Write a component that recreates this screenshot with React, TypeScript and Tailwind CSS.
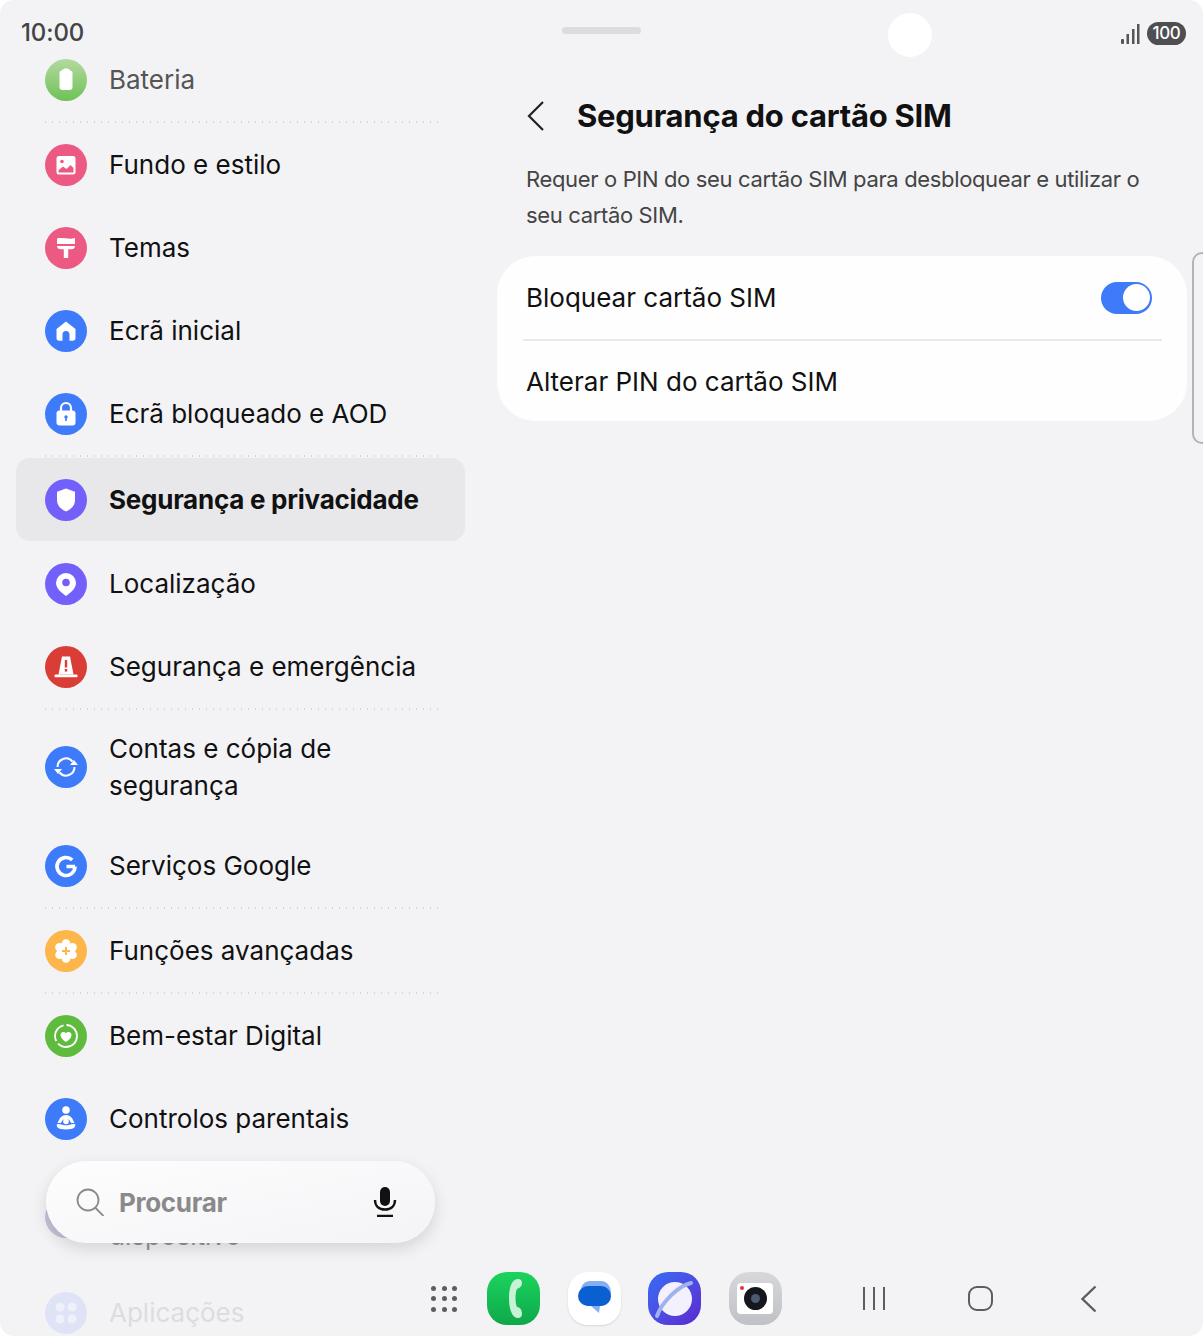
import type { ReactNode } from 'react';

const Divider = () => (
  <div className="ml-[42px] h-[2px] w-[399px] bg-[radial-gradient(circle,#d4d4d8_0.9px,transparent_1.1px)] bg-[length:7px_2px]" />
);

function Row({
  color,
  label,
  icon,
  className = 'h-[83px]',
  textClass = 'font-normal text-[#111]',
}: {
  color: string;
  label: ReactNode;
  icon: ReactNode;
  className?: string;
  textClass?: string;
}) {
  return (
    <div className={`flex items-center pl-[45px] pr-4 ${className}`}>
      <div className={`h-[42px] w-[42px] shrink-0 rounded-full ${color}`}>
        <svg viewBox="0 0 42 42" className="h-[42px] w-[42px]" fill="#fff">
          {icon}
        </svg>
      </div>
      <div className={`ml-[22px] text-[26px] leading-[37px] ${textClass}`}>{label}</div>
    </div>
  );
}

function Sidebar() {
  return (
    <div className="w-[481px] shrink-0 pt-[38px]">
      <Row
        color="bg-gradient-to-b from-[#b3d9a0] to-[#6dc253]"
        label="Bateria"
        textClass="text-[#555]"
        icon={<path d="M17 11.500c0-.8.5-1.300 1.200-1.300h.8V9.500h4v.7h.8c.7 0 1.200.5 1.200 1.300 1.600.2 2.500 1 2.500 2.500v14c0 2-1.200 3-3 3h-7c-1.800 0-3-1-3-3V14c0-1.500.9-2.300 2.500-2.500z" />}
      />
      <Divider />
      <Row
        color="bg-[#ec5a84]"
        label="Fundo e estilo"
        icon={
          <>
            <rect x="11.500" y="12" width="19" height="18.500" rx="2.500" />
            <circle cx="17" cy="17.500" r="1.800" fill="#ec5a84" />
            <path d="M13.500 28.500v-2.300l4.500-3.700 3.500 2.500 4-4 3 3v4.500z" fill="#ec5a84" />
          </>
        }
      />
      <Row
        color="bg-[#ec5a84]"
        label="Temas"
        icon={
          <>
            <path d="M12 11.500c6-1.500 12 1.300 18-.5v6H12z" />
            <path d="M12 19h18c0 2-1.500 3.300-4 3.300h-2.800V31h-4.400v-8.700H16c-2.500 0-4-1.300-4-3.300z" />
          </>
        }
      />
      <Row
        color="bg-[#3e7bfa]"
        label="Ecrã inicial"
        icon={
          <path d="M21 11.500 11.500 19v9c0 1.800 1 2.800 2.800 2.800h3.200v-6.300a3.500 3.500 0 0 1 7 0v6.300h3.200c1.800 0 2.800-1 2.800-2.800v-9z" />
        }
      />
      <Row
        color="bg-[#3e7bfa]"
        label="Ecrã bloqueado e AOD"
        icon={
          <>
            <path d="M16 18v-3a5 5 0 0 1 10 0v3" fill="none" stroke="#fff" strokeWidth="2.200" />
            <rect x="11.500" y="17.500" width="19" height="15" rx="3" />
            <circle cx="21" cy="24" r="1.700" fill="#3e7bfa" />
            <rect x="20.200" y="24" width="1.600" height="4" fill="#3e7bfa" />
          </>
        }
      />
      <Divider />
      <div className="mx-4 mt-px h-[83px] rounded-[14px] bg-[#e8e8eb]">
        <Row
          color="bg-[#7360fa]"
          label="Segurança e privacidade"
          className="h-[83px] !pl-[29px]"
          textClass="font-bold tracking-[-0.25px] text-[#111]"
          icon={<path d="M21 9.500 12 12.800v8.200c0 5.500 3.500 9 9 11.500 5.500-2.500 9-6 9-11.500v-8.200z" />}
        />
      </div>
      <Row
        color="bg-[#7360fa]"
        label="Localização"
        className="mt-px h-[83px]"
        icon={
          <>
            <path d="M21 10a10 10 0 0 0-10 10c0 5 4.500 9 10 13 5.500-4 10-8 10-13a10 10 0 0 0-10-10z" />
            <circle cx="21" cy="19.500" r="3.800" fill="#7360fa" />
          </>
        }
      />
      <Row
        color="bg-[#d93d36]"
        label="Segurança e emergência"
        icon={
          <>
            <path d="M17 10.500h8l3.500 18H13.500z" />
            <rect x="9.500" y="28.500" width="23" height="2.800" rx="1" />
            <rect x="19.800" y="14" width="2.400" height="7.500" fill="#d93d36" />
            <rect x="19.800" y="23" width="2.400" height="2.600" fill="#d93d36" />
          </>
        }
      />
      <Divider />
      <Row
        color="bg-[#3e7bfa]"
        label={
          <>
            Contas e cópia de
            <br />
            segurança
          </>
        }
        className="h-[114px]"
        icon={
          <>
            <path d="M12.500 21a8.500 8.500 0 0 1 15-5.500M29.500 21a8.500 8.500 0 0 1-15 5.500" fill="none" stroke="#fff" strokeWidth="2" />
            <path d="M25 19h8l-4-5zM9 23h8l-4 5z" />
          </>
        }
      />
      <Row
        color="bg-[#3e7bfa]"
        label="Serviços Google"
        icon={
          <path d="M30 21.500a9 9 0 1 1-2.800-6.500M21.500 21.500H30" fill="none" stroke="#fff" strokeWidth="3.600" />
        }
      />
      <Divider />
      <Row
        color="bg-[#fdb64a]"
        label="Funções avançadas"
        icon={
          <>
            <circle cx="21" cy="13.500" r="4.300" />
            <circle cx="27.500" cy="17.300" r="4.300" />
            <circle cx="27.500" cy="24.700" r="4.300" />
            <circle cx="21" cy="28.500" r="4.300" />
            <circle cx="14.500" cy="24.700" r="4.300" />
            <circle cx="14.500" cy="17.300" r="4.300" />
            <circle cx="21" cy="21" r="6" />
            <path d="M21 17v8M17 21h8" stroke="#fdb64a" strokeWidth="2" />
          </>
        }
      />
      <Divider />
      <Row
        color="bg-[#5fbb3e]"
        label="Bem-estar Digital"
        icon={
          <>
            <circle cx="21" cy="21" r="11" fill="none" stroke="#fff" strokeWidth="1.800" strokeDasharray="26 3 20 3 17" />
            <path d="M21 27c-3-2.200-5.500-4.200-5.500-6.800 0-3.500 4-4.200 5.500-1.700 1.500-2.500 5.500-1.800 5.500 1.700 0 2.600-2.500 4.600-5.500 6.800z" />
          </>
        }
      />
      <Row
        color="bg-[#3e7bfa]"
        label="Controlos parentais"
        icon={
          <>
            <circle cx="21" cy="12" r="3.800" />
            <path d="M15 20c3.500-4 8.500-4 12 0l2.500 5h-3.300l-2-3c-2-1.500-4.400-1.500-6.400 0l-2 3h-3.300z" />
            <path d="M12 26c2.800-.5 4 1 9 1.200 5-.2 6.200-1.700 9-1.200 1 2.500-.5 5.500-9 5.500s-10-3-9-5.500z" />
            <circle cx="21" cy="23.500" r="2.800" />
          </>
        }
      />
      <Row
        color="bg-[#a8a4c8]"
        label={
          <>
            Manutenção do
            <br />
            dispositivo
          </>
        }
        className="h-[114px] opacity-60"
        textClass="text-[#555]"
        icon={<circle cx="21" cy="21" r="9" />}
      />
      <Row
        color="bg-[#dfe3f6]"
        label="Aplicações"
        className="-mt-[3px] h-[83px]"
        textClass="text-[#dcdce2]"
        icon={
          <>
            <circle cx="15" cy="15" r="4.500" fill="#eef0fa" />
            <circle cx="27" cy="15" r="4.500" fill="#eef0fa" />
            <circle cx="15" cy="27" r="4.500" fill="#eef0fa" />
            <circle cx="27" cy="27" r="4.500" fill="#eef0fa" />
          </>
        }
      />
    </div>
  );
}

function Main() {
  return (
    <div className="min-w-0 flex-1 pl-4 pr-4 pt-[93px]">
      <div className="flex h-[46px] items-center pl-[29px]">
        <svg viewBox="0 0 20 32" className="h-[32px] w-[20px]" fill="none" stroke="#222" strokeWidth="2.200">
          <path d="M17 2 3 16l14 14" />
        </svg>
        <h1 className="ml-[31px] text-[31px] font-bold leading-[46px] tracking-[-0.25px] text-[#111]">
          Segurança do cartão SIM
        </h1>
      </div>
      <p className="mt-[22px] pl-[29px] pr-[30px] text-[22px] leading-[36px] tracking-[-0.35px] text-[#444]">
        Requer o PIN do seu cartão SIM para desbloquear e utilizar o seu cartão SIM.
      </p>
      <div className="mt-[23px] h-[165px] rounded-[38px] bg-white/90">
        <div className="flex h-[83px] items-center justify-between pl-[29px] pr-[35px] text-[26px] text-[#111]">
          <span>Bloquear cartão SIM</span>
          <div className="flex h-[32px] w-[51px] items-center justify-end rounded-full bg-[#3e7bfa] pr-[2px]">
            <div className="h-[27px] w-[27px] rounded-full bg-white" />
          </div>
        </div>
        <div className="ml-[26px] mr-[25px] h-[2px] bg-[#e9e9ec]" />
        <div className="flex h-[80px] items-center pl-[29px] text-[26px] text-[#111]">Alterar PIN do cartão SIM</div>
      </div>
    </div>
  );
}

function SearchPill() {
  return (
    <div className="absolute left-[46px] top-[1161px] flex h-[82px] w-[389px] items-center rounded-full bg-gradient-to-br from-[#fdfdfe] to-[#f4f4f6] pl-[30px] pr-[38px] shadow-[0_6px_16px_rgba(0,0,0,0.13)]">
      <svg viewBox="0 0 28 28" className="h-[28px] w-[28px]" fill="none" stroke="#8a8a8c" strokeWidth="1.800">
        <circle cx="12" cy="12" r="10.500" />
        <path d="m19.500 20 8 8" />
      </svg>
      <span className="ml-[15px] flex-1 text-[26px] font-bold tracking-[-0.3px] text-[#8a8a8c]">Procurar</span>
      <svg viewBox="0 0 24 30" className="h-[30px] w-[24px]" fill="none" stroke="#111" strokeWidth="2.400">
        <rect x="7" y="0" width="10" height="19" rx="5" fill="#111" stroke="none" />
        <path d="M2 13c0 6 4 9.500 10 9.500S22 19 22 13M4 29h16" />
      </svg>
    </div>
  );
}

function Dock() {
  return (
    <div className="absolute left-[431px] top-[1272px] flex h-[53px] items-center">
      <div className="grid h-[26px] w-[26px] grid-cols-3 gap-[5.500px]">
        {Array.from({ length: 9 }).map((_, i) => (
          <div key={i} className="h-[5px] w-[5px] rounded-full bg-[#5d5d5f]" />
        ))}
      </div>
      <div className="ml-[30px] flex gap-[27.5px]">
        <div className="h-[53px] w-[53px] rounded-[20px] bg-gradient-to-b from-[#1bd45d] to-[#0ea84a]">
          <svg viewBox="0 0 53 53" className="h-[53px] w-[53px]">
            <path d="M30 7c-5 1-8 8-8 19s3 19 8 20c3 .5 5-1 5-4 0-4-2-7-5-7-2-4-2-14 0-18 3-1 5-3 5-6 0-3-2-4.500-5-4z" fill="#c8f2d6" />
          </svg>
        </div>
        <div className="h-[53px] w-[53px] rounded-[20px] bg-white shadow-[0_1px_2px_rgba(0,0,0,0.12)]">
          <svg viewBox="0 0 53 53" className="h-[53px] w-[53px]">
            <path d="M13 18c0-5 4-9 9-9h11c6 0 10 5 10 12s-4 13-10 13h-1l-1 7-8-7h-2c-5 0-8-4-8-9z" fill="#86aef4" />
            <rect x="10" y="14" width="33" height="20" rx="10" fill="#0a5fd1" />
          </svg>
        </div>
        <div className="h-[53px] w-[53px] rounded-[20px] bg-gradient-to-br from-[#2f6cf6] to-[#5a24d0]">
          <svg viewBox="0 0 53 53" className="h-[53px] w-[53px]" fill="none">
            <circle cx="27" cy="27" r="17" fill="#f3f1fd" />
            <path d="M9 44C14 30 30 14 43 11" stroke="#9fb2ee" strokeWidth="4" strokeLinecap="round" />
          </svg>
        </div>
        <div className="flex h-[53px] w-[53px] items-center justify-center rounded-[20px] bg-gradient-to-b from-[#d6d8dc] to-[#bfc1c6]">
          <div className="relative flex h-[31px] w-[36px] items-center justify-center rounded-[4px] bg-white">
            <div className="absolute left-[3px] top-[3px] h-[4px] w-[4px] rounded-full bg-[#e8333a]" />
            <div className="flex h-[23px] w-[23px] items-center justify-center rounded-full bg-[#15171c]">
              <div className="h-[9px] w-[9px] rounded-full bg-[#4a5a70]" />
            </div>
          </div>
        </div>
      </div>
      <div className="ml-[81px] flex h-[23px] gap-[8px]">
        <div className="h-full w-[2px] bg-[#5d5d5f]" />
        <div className="h-full w-[2px] bg-[#5d5d5f]" />
        <div className="h-full w-[2px] bg-[#5d5d5f]" />
      </div>
      <div className="ml-[83px] h-[25px] w-[25px] rounded-[9px] border-[2.500px] border-[#5d5d5f]" />
      <svg viewBox="0 0 17 28" className="ml-[87px] h-[28px] w-[17px]" fill="none" stroke="#5d5d5f" strokeWidth="2.400">
        <path d="M15.500 1.500 2.500 14l13 12.500" />
      </svg>
    </div>
  );
}

export default function App() {
  return (
    <div className="h-[1336px] w-[1203px] overflow-hidden bg-white font-['Inter',sans-serif]">
      <div className="relative flex h-[1336px] overflow-hidden rounded-[14px] bg-[#f3f3f6]">
        <Sidebar />
        <Main />

        {/* status bar */}
        <div className="absolute left-[21px] top-[16px] text-[24px] font-medium leading-[34px] tracking-[-0.1px] text-[#444]">10:00</div>
        <div className="absolute left-[562px] top-[27px] h-[7px] w-[79px] rounded-full bg-[#dcdce0]" />
        <div className="absolute left-[888px] top-[13px] h-[44px] w-[44px] rounded-full bg-white" />
        <div className="absolute left-[1121px] top-[22px] flex items-center gap-[7px]">
          <svg viewBox="0 0 19 22" className="h-[22px] w-[19px]" fill="#555">
            <rect x="0" y="16" width="3" height="5" rx="1" />
            <rect x="5.500" y="11" width="2.500" height="10" />
            <rect x="11" y="6" width="2.500" height="15" />
            <rect x="16" y="1" width="2.500" height="20" />
          </svg>
          <div className="flex h-[23px] w-[39px] items-center justify-center rounded-full bg-[#4f4f51] text-[17px] font-medium tracking-[-0.3px] text-white">
            100
          </div>
        </div>

        <div className="absolute left-[1192px] top-[252px] h-[192px] w-[20px] rounded-l-[10px] border-2 border-[#b4b4b6]" />
        <SearchPill />
        <Dock />
      </div>
    </div>
  );
}
